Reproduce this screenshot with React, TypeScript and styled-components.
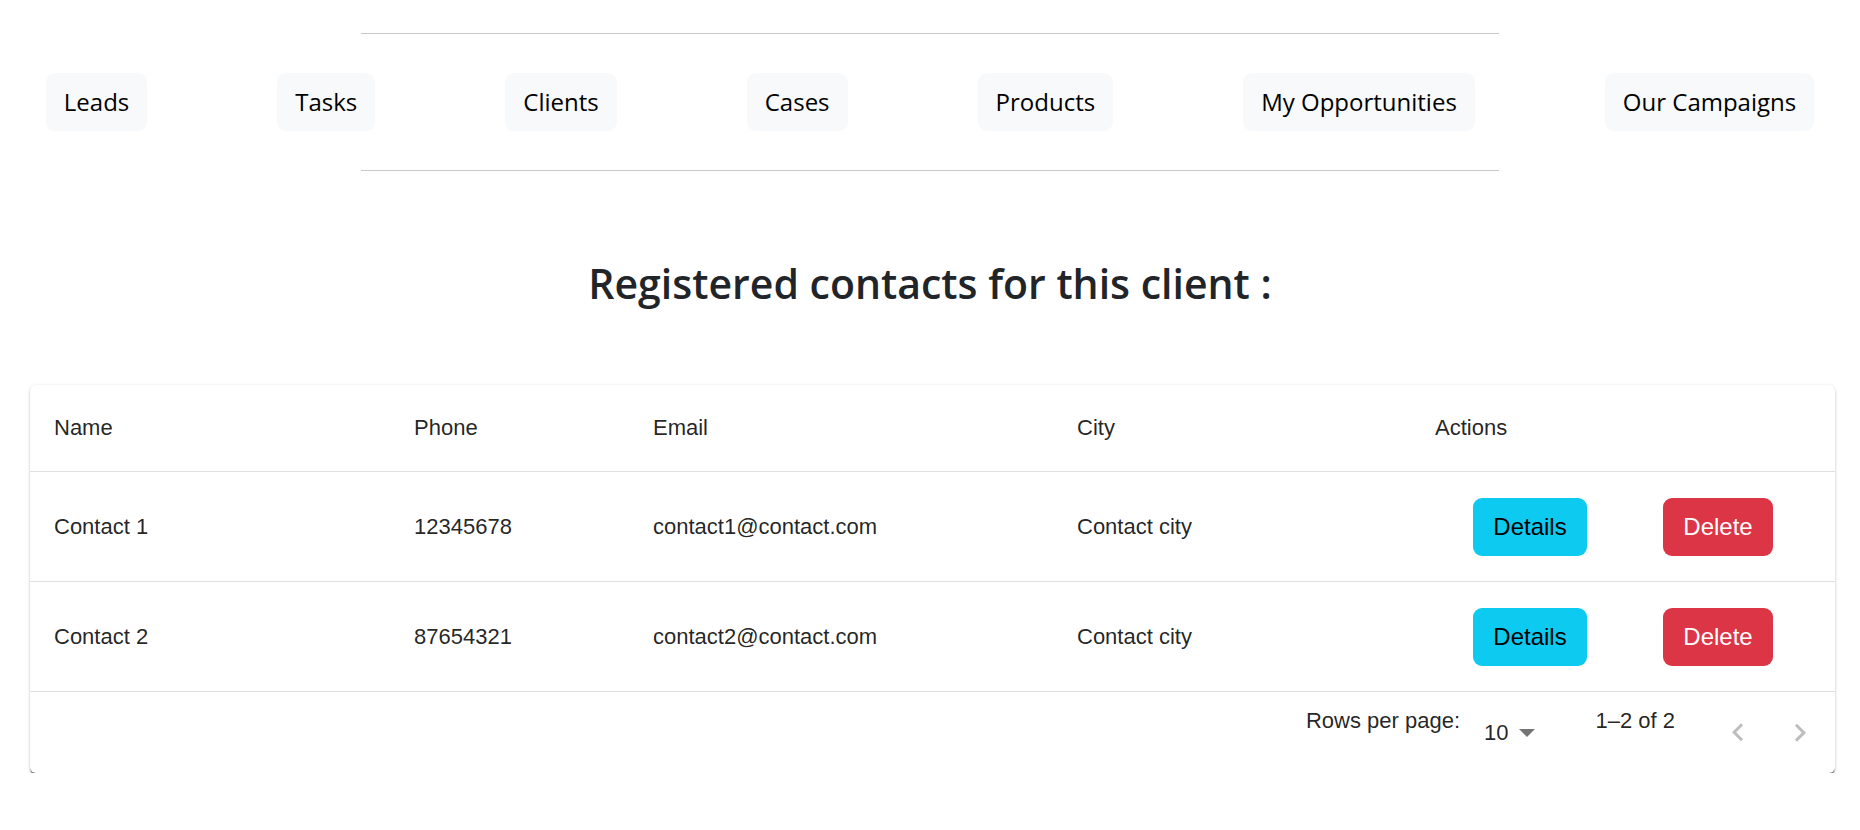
import React from 'react';
import styled, { createGlobalStyle } from 'styled-components';

const GlobalStyle = createGlobalStyle`
  html, body {
    margin: 0;
    padding: 0;
    background: #fff;
  }
  body {
    font-family: 'Open Sans', 'Noto Sans', sans-serif;
    color: #212529;
  }
  * {
    box-sizing: border-box;
  }
`;

const Header = styled.header`
  padding-top: 33px;
`;

const Rule = styled.hr`
  width: 1138px;
  margin: 0 auto;
  border: 0;
  border-top: 1px solid #c8c8c8;
`;

const NavRow = styled.nav`
  display: flex;
  justify-content: center;
  gap: 130px;
  padding: 39px 0;
`;

const NavButton = styled.button`
  font-family: 'Open Sans', 'Noto Sans', sans-serif;
  font-size: 24px;
  line-height: 34px;
  padding: 12px 18px;
  color: #000;
  background: #f8f9fa;
  border: 0;
  border-radius: 9px;
  cursor: pointer;
  white-space: nowrap;
`;

const Title = styled.h3`
  margin: 88px 0 77px;
  text-align: center;
  font-size: 41px;
  font-weight: 600;
  line-height: 1.2;
  color: #212529;
`;

const Card = styled.section`
  margin: 0 25px 0 30px;
  background: #fff;
  border-radius: 6px;
  overflow: hidden;
  box-shadow: 0 3px 1.5px -1.5px rgba(0, 0, 0, 0.45), 0 1.5px 1.5px 0 rgba(0, 0, 0, 0.2),
    0 1.5px 4.5px 0 rgba(0, 0, 0, 0.12);
  font-family: 'Liberation Sans', Arial, sans-serif;
  color: rgba(0, 0, 0, 0.87);
`;

const Table = styled.table`
  width: 100%;
  border-collapse: collapse;
  table-layout: fixed;
`;

const HeadCell = styled.th<{ $w?: number }>`
  width: ${(p) => (p.$w ? `${p.$w}px` : 'auto')};
  padding: 24px;
  font-size: 22px;
  font-weight: 400;
  line-height: 38px;
  text-align: left;
  border-bottom: 1px solid #e0e0e0;
`;

const Cell = styled.td`
  padding: 25.5px 24px;
  font-size: 22px;
  line-height: 24px;
  vertical-align: middle;
  border-bottom: 1px solid #e0e0e0;
`;

const Actions = styled.div`
  display: flex;
  justify-content: space-around;
  align-items: center;
`;

const ActionButton = styled.button<{ $variant: 'info' | 'danger' }>`
  font-family: 'Liberation Sans', Arial, sans-serif;
  font-size: 24px;
  line-height: 36px;
  height: 58px;
  padding: 0 20px;
  border: 0;
  border-radius: 9px;
  cursor: pointer;
  background: ${(p) => (p.$variant === 'info' ? '#0dcaf0' : '#dc3545')};
  color: ${(p) => (p.$variant === 'info' ? '#000' : '#fff')};
`;

const Footer = styled.div`
  display: flex;
  justify-content: flex-end;
  align-items: center;
  height: 81px;
  padding-right: 4px;
  font-size: 22px;
`;

const FooterLabel = styled.p`
  margin: 0 0 24px;
  line-height: 24px;
  white-space: nowrap;
`;

const RowsSelect = styled.div`
  display: flex;
  align-items: center;
  margin: 0 60px 0 24px;
  line-height: 24px;
  cursor: pointer;

  svg {
    margin-left: 11px;
  }
`;

const PagerActions = styled.div`
  display: flex;
  margin-left: 32px;
`;

const IconButton = styled.button`
  display: flex;
  padding: 13px;
  border: 0;
  background: transparent;
  color: rgba(0, 0, 0, 0.26);
`;

const columns = [
  { label: 'Name', w: 360 },
  { label: 'Phone', w: 239 },
  { label: 'Email', w: 424 },
  { label: 'City', w: 358 },
  { label: 'Actions' },
];

const contacts = [
  { name: 'Contact 1', phone: '12345678', email: 'contact1@contact.com', city: 'Contact city' },
  { name: 'Contact 2', phone: '87654321', email: 'contact2@contact.com', city: 'Contact city' },
];

const navItems = ['Leads', 'Tasks', 'Clients', 'Cases', 'Products', 'My Opportunities', 'Our Campaigns'];

function Chevron({ dir }: { dir: 'left' | 'right' }) {
  return (
    <svg width="36" height="36" viewBox="0 0 24 24" fill="currentColor">
      {dir === 'left' ? (
        <path d="M15.41 16.09l-4.58-4.59 4.58-4.59L14 5.5l-6 6 6 6z" />
      ) : (
        <path d="M8.59 16.34l4.58-4.59-4.58-4.59L10 5.75l6 6-6 6z" />
      )}
    </svg>
  );
}

export default function App() {
  return (
    <>
      <GlobalStyle />
      <Header>
        <Rule />
        <NavRow>
          {navItems.map((item) => (
            <NavButton key={item}>{item}</NavButton>
          ))}
        </NavRow>
        <Rule />
      </Header>

      <Title>Registered contacts for this client :</Title>

      <Card>
        <Table>
          <thead>
            <tr>
              {columns.map((c) => (
                <HeadCell key={c.label} $w={c.w}>
                  {c.label}
                </HeadCell>
              ))}
            </tr>
          </thead>
          <tbody>
            {contacts.map((c) => (
              <tr key={c.name}>
                <Cell>{c.name}</Cell>
                <Cell>{c.phone}</Cell>
                <Cell>{c.email}</Cell>
                <Cell>{c.city}</Cell>
                <Cell>
                  <Actions>
                    <ActionButton $variant="info">Details</ActionButton>
                    <ActionButton $variant="danger">Delete</ActionButton>
                  </Actions>
                </Cell>
              </tr>
            ))}
          </tbody>
        </Table>
        <Footer>
          <FooterLabel>Rows per page:</FooterLabel>
          <RowsSelect>
            10
            <svg width="16" height="8" viewBox="7 10 10 5" fill="rgba(0,0,0,0.54)">
              <path d="M7 10l5 5 5-5z" />
            </svg>
          </RowsSelect>
          <FooterLabel>1–2 of 2</FooterLabel>
          <PagerActions>
            <IconButton aria-label="Previous page">
              <Chevron dir="left" />
            </IconButton>
            <IconButton aria-label="Next page">
              <Chevron dir="right" />
            </IconButton>
          </PagerActions>
        </Footer>
      </Card>
    </>
  );
}
